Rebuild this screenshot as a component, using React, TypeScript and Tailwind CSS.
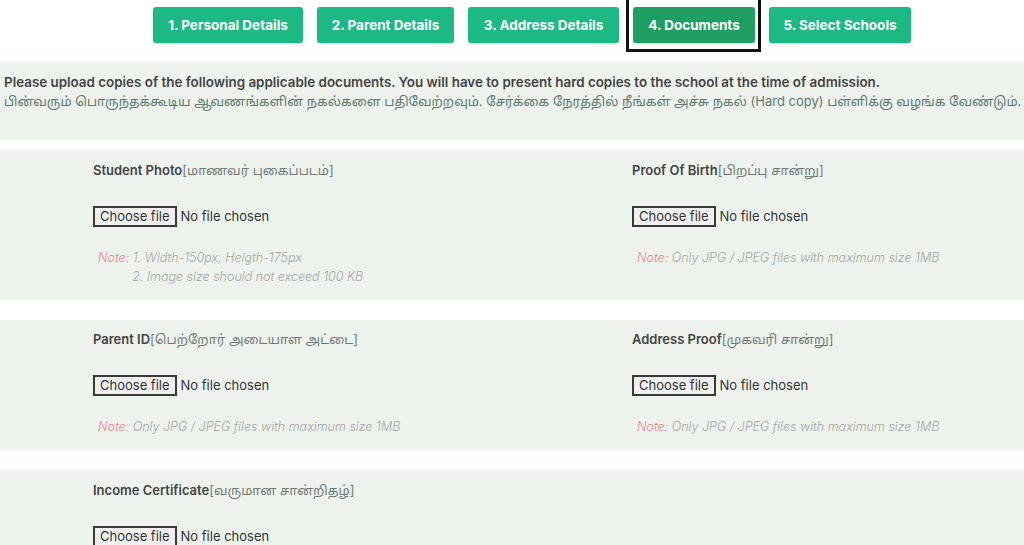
const tabs = [
  { label: "1. Personal Details", w: "w-[150px]" },
  { label: "2. Parent Details", w: "w-[137px]" },
  { label: "3. Address Details", w: "w-[151px]" },
  { label: "4. Documents", w: "w-[122px]", active: true },
  { label: "5. Select Schools", w: "w-[142px]" },
];

const font = "font-['Inter','Noto_Sans_Tamil','Lohit_Tamil','Noto_Sans',sans-serif]";

function FileInput() {
  return (
    <div className="flex items-center h-[21px] text-[13px] text-[#333]">
      <span className="h-[21px] px-[5px] flex items-center border-2 border-[#3a3a3a] bg-[#f0f0f0] leading-none">
        Choose file
      </span>
      <span className="ml-[4px]">No file chosen</span>
    </div>
  );
}

function Note({ lines }: { lines: string[] }) {
  return (
    <div className="pl-[5px] text-[12.5px] italic font-light text-[#a3a8a4] leading-[19px]">
      <div>
        <span className="text-[#ea8290]">Note:</span> {lines[0]}
      </div>
      {lines[1] && <div className="pl-[34px]">{lines[1]}</div>}
    </div>
  );
}

function Field({
  title,
  tamil,
  note,
}: {
  title: string;
  tamil: string;
  note: string[];
}) {
  return (
    <div className="flex flex-col">
      <div className="text-[13px] leading-[20px] text-[#444]">
        <span className="font-semibold">{title}</span>
        <span className="text-[#737c77]">[{tamil}]</span>
      </div>
      <div className="mt-[26px]">
        <FileInput />
      </div>
      {note.length > 0 && (
        <div className="mt-[21px]">
          <Note lines={note} />
        </div>
      )}
    </div>
  );
}

const JPG = ["Only JPG / JPEG files with maximum size 1MB"];

export default function App() {
  return (
    <div className={`w-[1024px] h-[545px] overflow-hidden bg-white ${font}`}>
      {/* Step tabs */}
      <div className="h-[62px] flex items-start pt-[7px] pl-[153px] gap-[14px]">
        {tabs.map((t) => (
          <div key={t.label} className="relative">
            {t.active && (
              <div className="absolute -left-[7px] -right-[6px] -top-[10px] -bottom-[9px] border-[3px] border-[#111]" />
            )}
            <button
              className={`relative h-[36px] ${t.w} rounded-[3px] text-[13.5px] font-bold text-white shadow-sm ${
                t.active ? "bg-[#1f9e62]" : "bg-[#1cb985]"
              }`}
            >
              {t.label}
            </button>
          </div>
        ))}
      </div>

      {/* Info */}
      <div className="h-[78px] bg-[#eef3ee] px-[4px] pt-[11px] text-[13.4px] leading-[19px] whitespace-nowrap">
        <div className="font-semibold text-[#444]">
          Please upload copies of the following applicable documents. You will have to present hard copies to the
          school at the time of admission.
        </div>
        <div className="text-[#5d7b70] text-[13px]">
          பின்வரும் பொருந்தக்கூடிய ஆவணங்களின் நகல்களை பதிவேற்றவும். சேர்க்கை நேரத்தில் நீங்கள் அச்சு நகல் (Hard
          copy) பள்ளிக்கு வழங்க வேண்டும்.
        </div>
      </div>

      <div className="h-[10px]" />

      {/* Row 1 */}
      <div className="h-[150px] bg-[#eef3ee] pl-[93px] pt-[10px] grid grid-cols-[539px_1fr]">
        <Field
          title="Student Photo"
          tamil="மாணவர் புகைப்படம்"
          note={["1. Width-150px, Heigth-175px", "2. Image size should not exceed 100 KB"]}
        />
        <Field title="Proof Of Birth" tamil="பிறப்பு சான்று" note={JPG} />
      </div>

      <div className="h-[20px]" />

      {/* Row 2 */}
      <div className="h-[130px] bg-[#eef3ee] pl-[93px] pt-[9px] grid grid-cols-[539px_1fr]">
        <Field title="Parent ID" tamil="பெற்றோர் அடையாள அட்டை" note={JPG} />
        <Field title="Address Proof" tamil="முகவரி சான்று" note={JPG} />
      </div>

      <div className="h-[20px]" />

      {/* Row 3 */}
      <div className="h-[130px] bg-[#eef3ee] pl-[93px] pt-[10px] grid grid-cols-[539px_1fr]">
        <Field title="Income Certificate" tamil="வருமான சான்றிதழ்" note={[]} />
      </div>
    </div>
  );
}
